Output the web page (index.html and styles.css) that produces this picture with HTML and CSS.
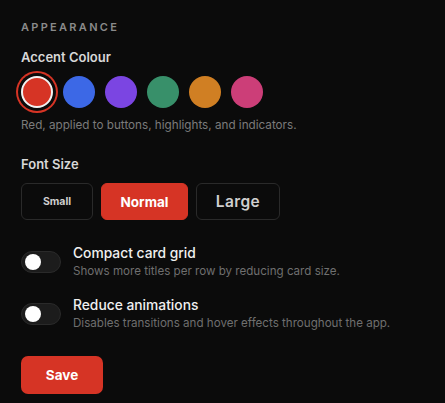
FILE: index.html
```html
<!DOCTYPE html>
<html lang="en">
<head>
<meta charset="utf-8">
<title>Appearance</title>
<link rel="stylesheet" href="styles.css">
</head>
<body>
<section class="panel">
  <h2 class="section-title">APPEARANCE</h2>

  <div class="field">
    <div class="label">Accent Colour</div>
    <div class="swatches">
      <button class="swatch selected" style="background:#d63425" aria-label="Red"></button>
      <button class="swatch" style="background:#3c68e6" aria-label="Blue"></button>
      <button class="swatch" style="background:#7b45e2" aria-label="Purple"></button>
      <button class="swatch" style="background:#38906a" aria-label="Green"></button>
      <button class="swatch" style="background:#d07f23" aria-label="Orange"></button>
      <button class="swatch" style="background:#cc3e78" aria-label="Pink"></button>
    </div>
    <div class="hint">Red, applied to buttons, highlights, and indicators.</div>
  </div>

  <div class="field field-font">
    <div class="label">Font Size</div>
    <div class="sizes">
      <button class="size size-small">Small</button>
      <button class="size size-normal active">Normal</button>
      <button class="size size-large">Large</button>
    </div>
  </div>

  <div class="toggles">
    <div class="toggle-row">
      <span class="switch"><span class="knob"></span></span>
      <div class="toggle-text">
        <div class="toggle-title">Compact card grid</div>
        <div class="toggle-desc">Shows more titles per row by reducing card size.</div>
      </div>
    </div>
    <div class="toggle-row">
      <span class="switch"><span class="knob"></span></span>
      <div class="toggle-text">
        <div class="toggle-title">Reduce animations</div>
        <div class="toggle-desc">Disables transitions and hover effects throughout the app.</div>
      </div>
    </div>
  </div>

  <button class="save">Save</button>
</section>
</body>
</html>
```

FILE: styles.css
```css
* { box-sizing: border-box; }
html, body {
  margin: 0;
  background: #0b0b0b;
}
body {
  font-family: Inter, "DejaVu Sans", sans-serif;
  color: #e6e6e6;
  width: 445px;
  height: 403px;
  overflow: hidden;
}
.panel {
  padding: 20px 21px 0 21px;
  display: flex;
  flex-direction: column;
}
.section-title {
  margin: 0;
  font-size: 11px;
  font-weight: 600;
  letter-spacing: 2.3px;
  color: #8a8a8a;
  line-height: 14px;
}
.field {
  display: flex;
  flex-direction: column;
}
.label {
  font-size: 13px;
  font-weight: 600;
  color: #d8d8d8;
  line-height: 16px;
  margin-top: 15px;
}
.field-font .label {
  margin-top: 23px;
}
.swatches {
  display: flex;
  gap: 10px;
  margin-top: 11px;
  padding: 0;
}
.swatch {
  width: 32px;
  height: 32px;
  border-radius: 50%;
  border: none;
  padding: 0;
  cursor: pointer;
}
.swatch.selected {
  border: 2.5px solid #f2f2f2;
  box-shadow: 0 0 0 3px #0b0b0b, 0 0 0 5px #d63425;
}
.hint {
  margin-top: 10px;
  font-size: 11.7px;
  color: #7b7b7b;
  line-height: 15px;
}
.sizes {
  display: flex;
  gap: 8px;
  margin-top: 11px;
}
.size {
  height: 37px;
  border-radius: 6px;
  border: 1px solid #2a2a2a;
  background: #0b0b0b;
  color: #cfcfcf;
  font-family: inherit;
  font-weight: 700;
  padding: 0;
}
.size-small { width: 72px; font-size: 10.5px; }
.size-normal { width: 87px; font-size: 13.5px; }
.size-large { width: 84px; font-size: 15.5px; font-weight: 600; letter-spacing: 0.4px; }
.size.active {
  background: #d63425;
  border-color: #d63425;
  color: #fff;
}
.toggles {
  display: flex;
  flex-direction: column;
  gap: 18px;
  margin-top: 25px;
}
.toggle-row {
  display: flex;
  gap: 12px;
  align-items: flex-start;
}
.switch {
  width: 40px;
  height: 22px;
  border-radius: 11px;
  background: #1c1c1c;
  border: 1px solid #2a2a2a;
  display: flex;
  align-items: center;
  padding-left: 3px;
  margin-top: 6px;
  flex: none;
}
.knob {
  width: 16px;
  height: 16px;
  border-radius: 50%;
  background: #fff;
}
.toggle-text {
  display: flex;
  flex-direction: column;
}
.toggle-title {
  font-size: 13.8px;
  font-weight: 500;
  color: #f0f0f0;
  line-height: 17px;
}
.toggle-desc {
  font-size: 11.6px;
  color: #6f6f6f;
  line-height: 15px;
  margin-top: 2px;
}
.save {
  margin-top: 25px;
  align-self: flex-start;
  width: 82px;
  height: 38px;
  border-radius: 7px;
  border: none;
  background: #d63425;
  color: #fff;
  font-family: inherit;
  font-weight: 700;
  font-size: 13.5px;
}
```
